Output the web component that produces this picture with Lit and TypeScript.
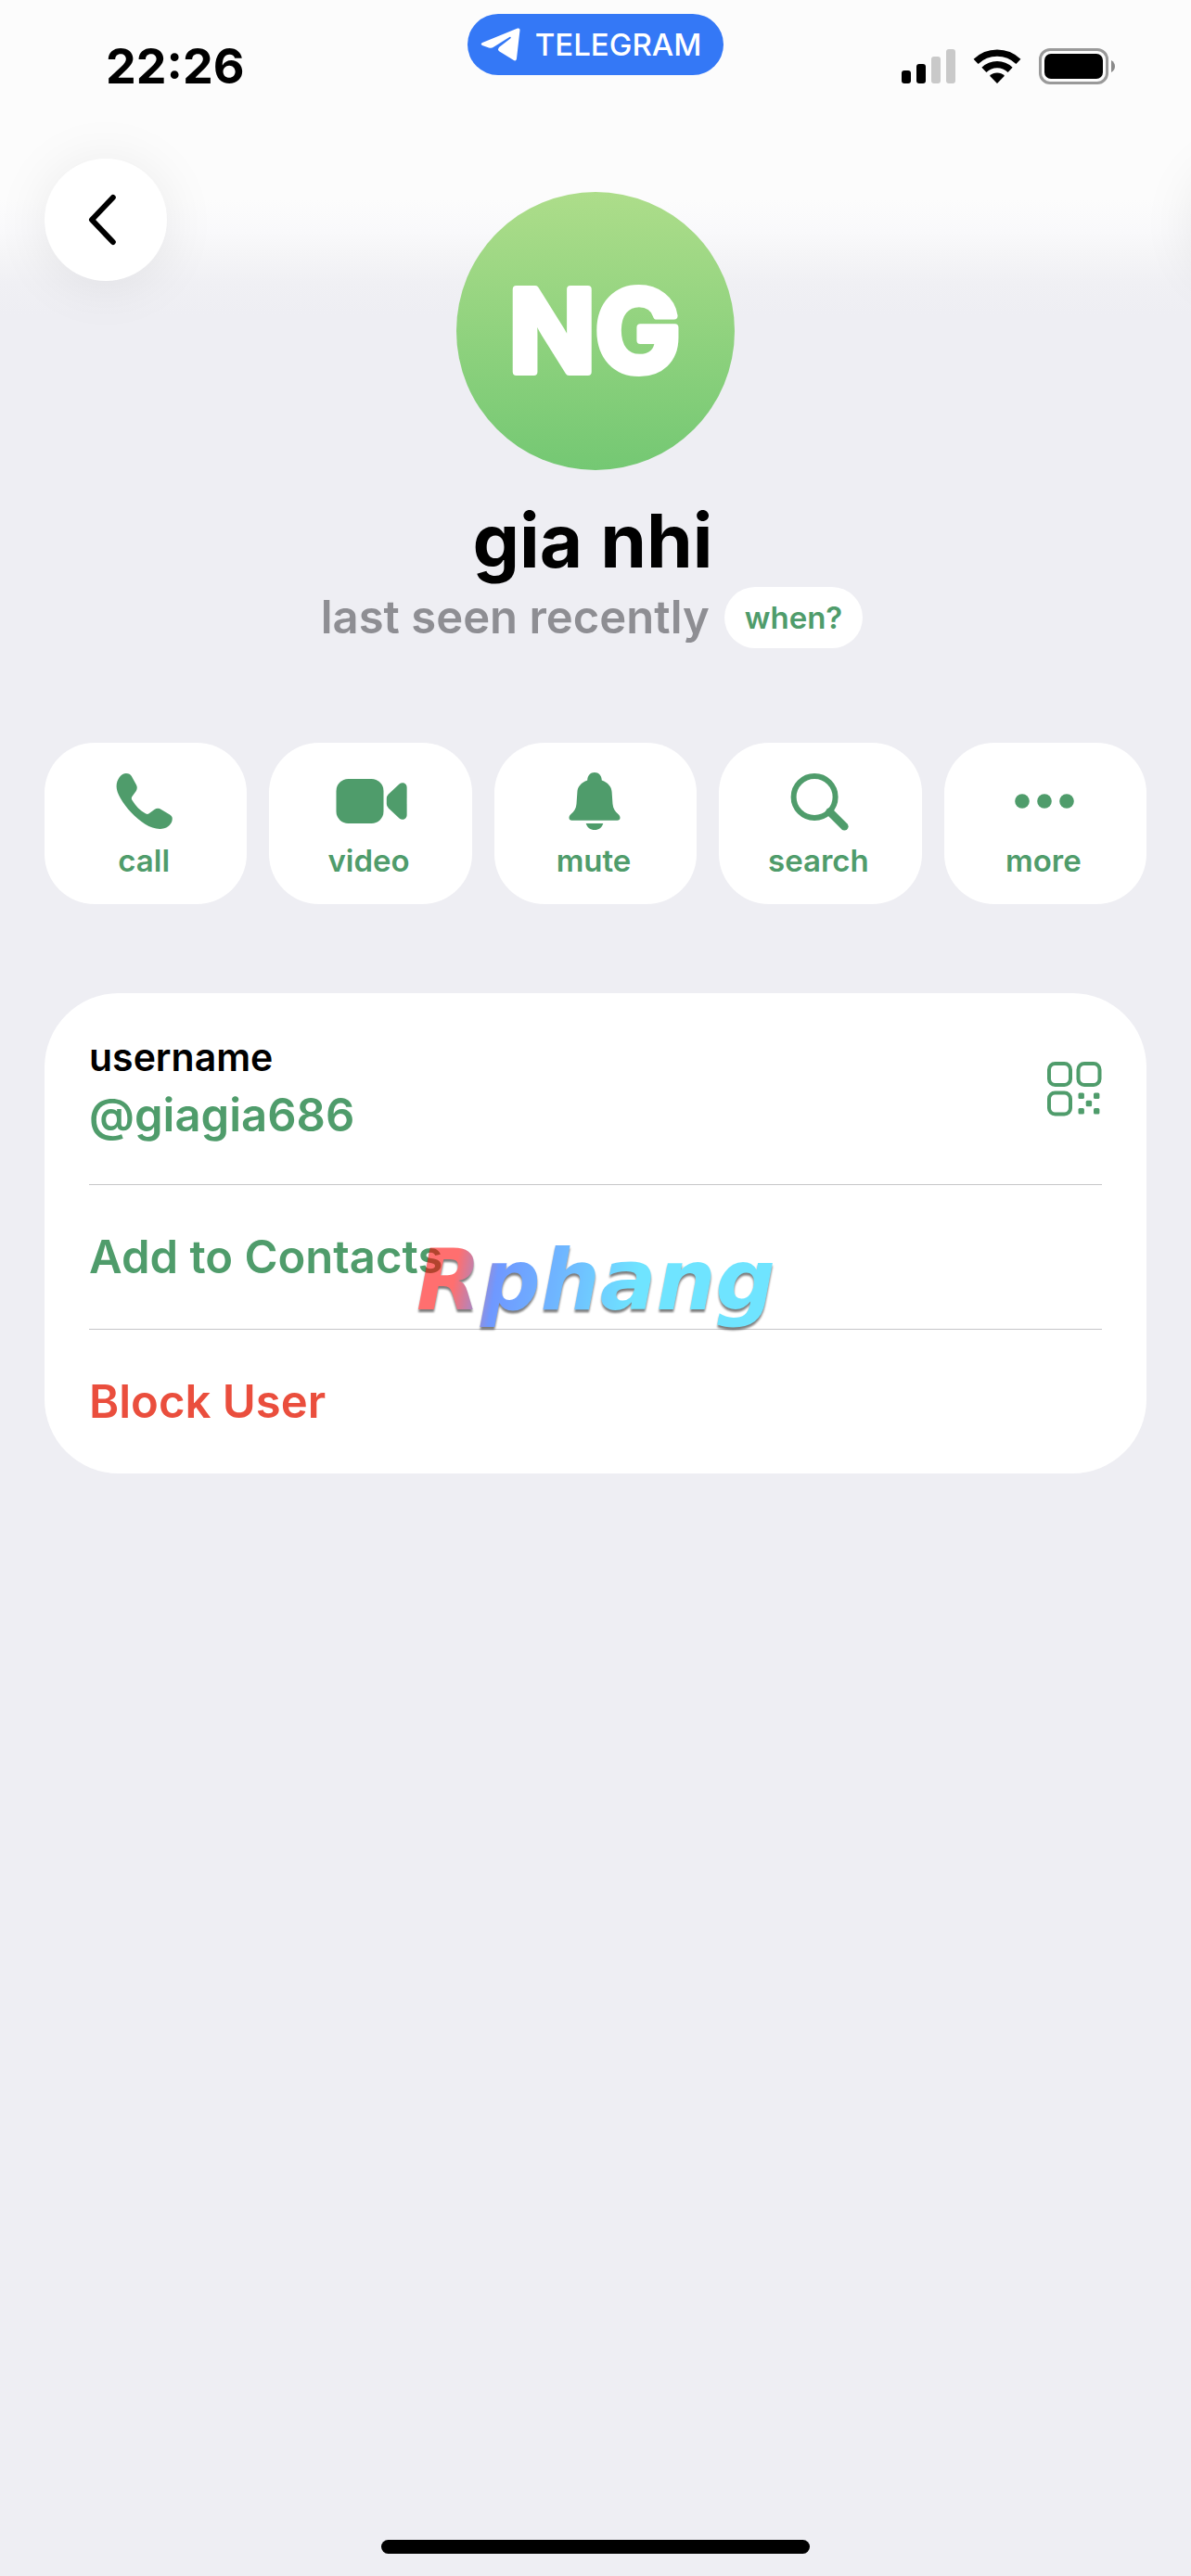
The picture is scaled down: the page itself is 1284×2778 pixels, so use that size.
import { LitElement, html, css, svg } from "lit";
import { customElement, property } from "lit/decorators.js";

const icons = {
  call: svg`<path d="M14.9 6C18 6 19.5 7 20.8 9L26 18.5C27.2 20.7 27 23 25.6 25.2L21.4 31C20.6 32.3 20.6 33.5 21.5 35C25.5 41.5 30 46 36.2 49.6C37.5 50.3 38.6 50.2 39.7 49.3L45.5 45C48 43.3 50.6 43.5 52.8 45L62 50.5C64.5 52 65 53.5 64.7 56C64 62 58 66 51.3 66C41 66 29.5 58 20.5 48.3C11 38 4.6 27.5 4.6 20.3C4.6 12 10 6 14.9 6Z"/>`,
  video: svg`<rect x="-1.5" y="12" width="51" height="48" rx="13"/><path d="M52.8 33q0-2.5 2-4.5L66.5 17.5C70 14.6 74.6 17 74.6 21V51C74.6 55 70 57.4 66.5 54.5L54.8 43.5q-2-2-2-4.5Z"/>`,
  mute: svg`<path d="M35 5C39.5 5 42.5 8 42.8 13.5C49.5 16 53.3 20.5 53.6 26L54.5 39C55 44 57 47 60.5 50C62 51.5 62.5 52.5 62.5 54C62.5 55.8 61.3 56.7 59.5 56.7H10.5C8.7 56.7 7.5 55.8 7.5 54C7.5 52.5 8 51.5 9.5 50C13 47 15 44 15.5 39L16.4 26C16.7 20.5 20.5 16 27.2 13.5C27.5 8 30.5 5 35 5Z"/><path d="M25.7 60H44.3C43 64.5 39.5 67 35 67S27 64.5 25.7 60Z"/>`,
  search: svg`<circle cx="30.1" cy="31.5" r="22.5" fill="none" stroke="currentColor" stroke-width="6"/><path d="M46.5 47.5L62.3 63.3" stroke="currentColor" stroke-width="8.6" stroke-linecap="round"/>`,
  more: svg`<circle cx="11" cy="36" r="7.8"/><circle cx="35" cy="36" r="7.8"/><circle cx="59" cy="36" r="7.8"/>`,
};

type IconName = keyof typeof icons;

@customElement("status-bar")
class StatusBar extends LitElement {
  static styles = css`
    :host {
      display: grid;
      grid-template-columns: 1fr auto 1fr;
      align-items: center;
      height: 144px;
      padding: 0 82px;
    }
    .time {
      padding-left: 32px;
      font-size: 52px;
      font-weight: 700;
      line-height: 60px;
    }
    .pill {
      display: flex;
      align-items: center;
      align-self: start;
      gap: 16px;
      height: 66px;
      margin-top: 15px;
      padding: 0 24px 0 14px;
      border-radius: 33px;
      background: #3478f6;
      color: #fff;
      font-size: 33px;
      font-weight: 500;
      text-decoration: none;
    }
    .levels {
      display: flex;
      align-items: center;
      justify-content: flex-end;
      gap: 19px;
    }
    svg {
      display: block;
      overflow: visible;
    }
  `;

  render() {
    return html`
      <div class="time">22:26</div>
      <a class="pill" href="#telegram">
        <svg width="43" height="36" viewBox="0 0 43 36" fill="currentColor" aria-hidden="true">
          <path d="M40 .6C41.5 0 42.6 .8 42.5 2.5L39 33C38.8 35.5 37.3 36 35.5 34.8L20.5 25.6C18.6 24.3 18.6 23 20 21L32.3 11.5C33.4 10 32.6 9.2 31.2 10L14.5 20.5C12.5 21.8 11 22 9 21.4L2 19C.3 18.2 .3 17 2 16Z"/>
        </svg>
        <span>TELEGRAM</span>
      </a>
      <div class="levels">
        <svg width="58" height="38" viewBox="0 0 58 38" role="img" aria-label="Signal">
          <rect x="0" y="23" width="10" height="14" rx="3"/>
          <rect x="16" y="16" width="10" height="21" rx="3"/>
          <rect x="32" y="8" width="10" height="29" rx="3" fill="#c9c9c9"/>
          <rect x="48" y="0" width="10" height="37" rx="3" fill="#c9c9c9"/>
        </svg>
        <svg width="52" height="38" viewBox="0 0 52 38" role="img" aria-label="Wi-Fi">
          <path d="M3.1 13.3A33 33 0 0 1 48.9 13.3" fill="none" stroke="#000" stroke-width="7.2"/>
          <path d="M11.9 22.4A20.3 20.3 0 0 1 40.1 22.4" fill="none" stroke="#000" stroke-width="7.2"/>
          <path d="M26 37L18 28.7A11.5 11.5 0 0 1 34 28.7Z"/>
        </svg>
        <svg width="82" height="40" viewBox="0 0 82 40" role="img" aria-label="Battery">
          <rect x="1.5" y="1.5" width="72" height="36" rx="10.5" fill="none" stroke="#999" stroke-width="3"/>
          <rect x="6" y="6" width="63" height="27" rx="7"/>
          <path d="M78 13Q82 15.5 82 19.5T78 26Z" fill="#8a8a8a"/>
        </svg>
      </div>
    `;
  }
}

@customElement("action-button")
class ActionButton extends LitElement {
  @property() icon: IconName = "call";

  static styles = css`
    :host {
      display: block;
      flex: 1 1 0;
      min-width: 0;
    }
    .action {
      display: flex;
      flex-direction: column;
      align-items: center;
      gap: 8px;
      width: 100%;
      padding: 27px 0;
      border: 0;
      border-radius: 54px;
      background: #fff;
      color: #4f9c6b;
      font: 600 33px/40px Inter, "Liberation Sans", sans-serif;
    }
    .caption {
      padding-right: 4px;
    }
    svg {
      display: block;
      overflow: visible;
    }
  `;

  render() {
    return html`
      <button class="action" type="button">
        <svg width="72" height="72" viewBox="0 0 72 72" fill="currentColor" aria-hidden="true">${icons[this.icon]}</svg>
        <span class="caption">${this.icon}</span>
      </button>
    `;
  }
}

@customElement("app-root")
class AppRoot extends LitElement {
  static styles = css`
    :host {
      display: flex;
      flex-direction: column;
      position: relative;
      box-sizing: border-box;
      min-height: 100vh;
      overflow: hidden;
      background: linear-gradient(#fcfcfc 0, #fcfcfc 215px, #f9f9fb 250px, #f5f5f7 275px, #f0f0f4 305px, #eeeef3 340px);
      color: #000;
      font-family: Inter, "Liberation Sans", sans-serif;
    }
    .top {
      display: grid;
      grid-template-columns: 1fr auto 1fr;
      align-items: start;
      padding: 27px 48px 0;
    }
    .back,
    .offscreen {
      width: 132px;
      height: 132px;
      border: 0;
      border-radius: 50%;
      background: #fff;
      box-shadow: 0 4px 60px rgba(0, 0, 0, 0.08);
    }
    .back {
      padding: 0;
    }
    .offscreen {
      position: absolute;
      top: 171px;
      left: 100%;
    }
    .back svg,
    .avatar,
    .qr svg {
      display: block;
    }
    .avatar {
      margin-top: 36px;
    }
    .name {
      margin: 26px 0 0;
      padding-right: 6px;
      font-size: 80px;
      font-weight: 700;
      line-height: 100px;
      text-align: center;
    }
    .presence {
      display: flex;
      align-items: center;
      justify-content: center;
      gap: 16px;
      padding-right: 8px;
      color: #8e8e93;
      font-size: 49px;
      font-weight: 600;
      line-height: 66px;
    }
    .when {
      height: 66px;
      padding: 0 22px;
      border: 0;
      border-radius: 33px;
      background: #fff;
      color: #4f9c6b;
      font: 600 33px/66px Inter, "Liberation Sans", sans-serif;
    }
    .actions {
      display: flex;
      gap: 24px;
      margin: 102px 48px 0;
    }
    .card {
      position: relative;
      margin: 96px 48px 0;
      padding: 0 48px;
      border-radius: 80px;
      background: #fff;
    }
    .row {
      display: flex;
      align-items: center;
      justify-content: space-between;
      min-height: 155px;
    }
    .row + .row {
      border-top: 1px solid #c6c6c8;
    }
    .info {
      padding: 42px 0 38px;
    }
    .label {
      font-size: 41px;
      font-weight: 600;
      line-height: 54px;
    }
    .link {
      display: block;
      padding: 0;
      border: 0;
      background: none;
      color: #4f9c6b;
      font: 600 49px/72px Inter, "Liberation Sans", sans-serif;
      text-align: left;
      text-decoration: none;
    }
    .wide {
      flex: 1;
    }
    .danger {
      color: #ea4e3d;
    }
    .qr {
      padding: 0;
      border: 0;
      background: none;
      color: #4f9c6b;
    }
    .watermark {
      position: absolute;
      top: 258px;
      left: 401px;
      padding-right: 8px;
      background: linear-gradient(100deg, #f00 0, #f00 12%, #0049ff 23%, #0081ff 40%, #00d0ff 60%);
      background-clip: text;
      -webkit-background-clip: text;
      color: transparent;
      font: italic 700 90px/104px "DejaVu Sans", sans-serif;
      filter: drop-shadow(0 3px 1px rgba(0, 0, 0, 0.9));
      opacity: 0.56;
      pointer-events: none;
    }
    .home {
      width: 36%;
      height: 15px;
      margin: auto auto 24px;
      border-radius: 8px;
      background: #000;
    }
  `;

  render() {
    const actions: IconName[] = ["call", "video", "mute", "search", "more"];
    return html`
      <status-bar></status-bar>
      <div class="offscreen"></div>
      <div class="top">
        <button class="back" type="button" aria-label="Back">
          <svg width="132" height="132" viewBox="0 0 132 132" fill="none" stroke="#000" stroke-width="6" stroke-linecap="round" stroke-linejoin="round">
            <path d="M73.8 42L51 66L73.8 90"/>
          </svg>
        </button>
        <svg class="avatar" width="300" height="300" viewBox="0 0 300 300">
          <defs>
            <linearGradient id="leaf" x1="0" y1="0" x2="0" y2="1">
              <stop offset="0" stop-color="#addd8a"/>
              <stop offset="1" stop-color="#74c873"/>
            </linearGradient>
          </defs>
          <circle cx="150" cy="150" r="150" fill="url(#leaf)"/>
          <text x="149" y="194" text-anchor="middle" fill="#fff" stroke="#fff" stroke-width="8" stroke-linejoin="round" font-family="Inter, sans-serif" font-weight="700" font-size="122">NG</text>
        </svg>
      </div>
      <h1 class="name">gia nhi</h1>
      <div class="presence">
        <span>last seen recently</span>
        <button class="when" type="button">when?</button>
      </div>
      <nav class="actions">
        ${actions.map((name) => html`<action-button icon=${name}></action-button>`)}
      </nav>
      <section class="card">
        <div class="row">
          <div class="info">
            <div class="label">username</div>
            <a class="link" href="#giagia686">@giagia686</a>
          </div>
          <button class="qr" type="button" aria-label="QR code">
            <svg width="59" height="59" viewBox="0 0 59 59" fill="currentColor">
              <g fill="none" stroke="currentColor" stroke-width="4">
                <rect x="2" y="2" width="23" height="23" rx="6.5"/>
                <rect x="33.5" y="2" width="23" height="23" rx="6.5"/>
                <rect x="2" y="33.5" width="23" height="23" rx="6.5"/>
              </g>
              <rect x="33.5" y="33.5" width="6.4" height="6.4" rx="1.5"/>
              <rect x="50" y="33.5" width="6.4" height="6.4" rx="1.5"/>
              <rect x="41.7" y="41.8" width="6.4" height="6.4" rx="1.5"/>
              <rect x="33.5" y="50" width="6.4" height="6.4" rx="1.5"/>
              <rect x="50" y="50" width="6.4" height="6.4" rx="1.5"/>
            </svg>
          </button>
        </div>
        <div class="row"><button class="link wide" type="button">Add to Contacts</button></div>
        <div class="row"><button class="link wide danger" type="button">Block User</button></div>
        <div class="watermark">Rphang</div>
      </section>
      <div class="home"></div>
    `;
  }
}
